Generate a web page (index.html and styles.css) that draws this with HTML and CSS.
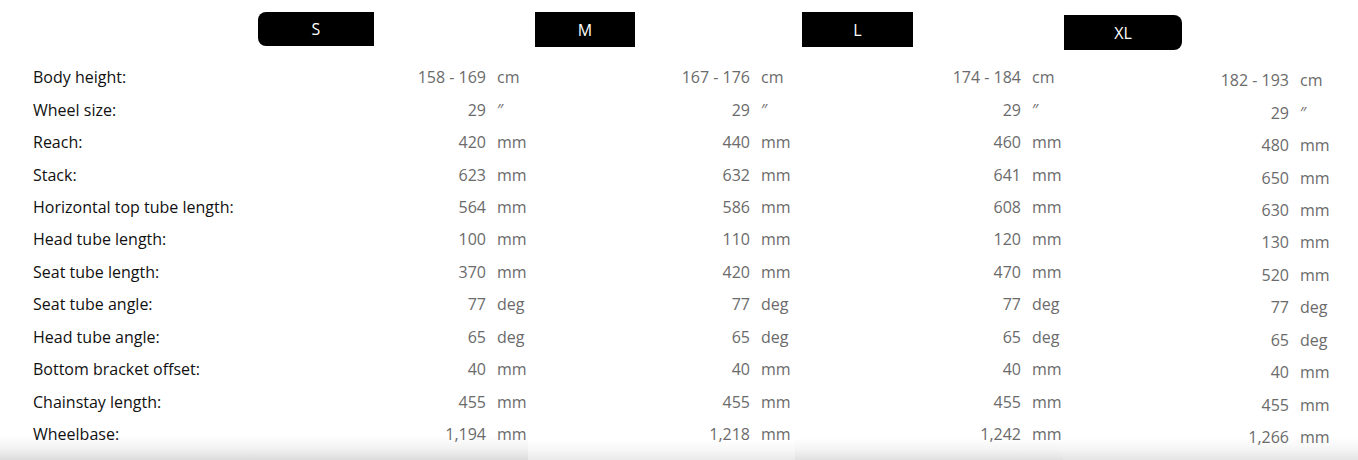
FILE: index.html
```html
<!DOCTYPE html>
<html lang="en">
<head>
<meta charset="utf-8">
<title>Geometry</title>
<link rel="stylesheet" href="styles.css">
</head>
<body>
<div class="geo">
  <div class="col col-s">
    <div class="head head-s">S</div>
    <div class="rows">
      <div class="row"><span class="label">Body height:</span><span class="num">158 - 169</span><span class="unit">cm</span></div>
      <div class="row"><span class="label">Wheel size:</span><span class="num">29</span><span class="unit">″</span></div>
      <div class="row"><span class="label">Reach:</span><span class="num">420</span><span class="unit">mm</span></div>
      <div class="row"><span class="label">Stack:</span><span class="num">623</span><span class="unit">mm</span></div>
      <div class="row"><span class="label">Horizontal top tube length:</span><span class="num">564</span><span class="unit">mm</span></div>
      <div class="row"><span class="label">Head tube length:</span><span class="num">100</span><span class="unit">mm</span></div>
      <div class="row"><span class="label">Seat tube length:</span><span class="num">370</span><span class="unit">mm</span></div>
      <div class="row"><span class="label">Seat tube angle:</span><span class="num">77</span><span class="unit">deg</span></div>
      <div class="row"><span class="label">Head tube angle:</span><span class="num">65</span><span class="unit">deg</span></div>
      <div class="row"><span class="label">Bottom bracket offset:</span><span class="num">40</span><span class="unit">mm</span></div>
      <div class="row"><span class="label">Chainstay length:</span><span class="num">455</span><span class="unit">mm</span></div>
      <div class="row"><span class="label">Wheelbase:</span><span class="num">1,194</span><span class="unit">mm</span></div>
    </div>
  </div>
  <div class="col col-m">
    <div class="head head-m">M</div>
    <div class="rows">
      <div class="row"><span class="num">167 - 176</span><span class="unit">cm</span></div>
      <div class="row"><span class="num">29</span><span class="unit">″</span></div>
      <div class="row"><span class="num">440</span><span class="unit">mm</span></div>
      <div class="row"><span class="num">632</span><span class="unit">mm</span></div>
      <div class="row"><span class="num">586</span><span class="unit">mm</span></div>
      <div class="row"><span class="num">110</span><span class="unit">mm</span></div>
      <div class="row"><span class="num">420</span><span class="unit">mm</span></div>
      <div class="row"><span class="num">77</span><span class="unit">deg</span></div>
      <div class="row"><span class="num">65</span><span class="unit">deg</span></div>
      <div class="row"><span class="num">40</span><span class="unit">mm</span></div>
      <div class="row"><span class="num">455</span><span class="unit">mm</span></div>
      <div class="row"><span class="num">1,218</span><span class="unit">mm</span></div>
    </div>
  </div>
  <div class="col col-l">
    <div class="head head-l">L</div>
    <div class="rows">
      <div class="row"><span class="num">174 - 184</span><span class="unit">cm</span></div>
      <div class="row"><span class="num">29</span><span class="unit">″</span></div>
      <div class="row"><span class="num">460</span><span class="unit">mm</span></div>
      <div class="row"><span class="num">641</span><span class="unit">mm</span></div>
      <div class="row"><span class="num">608</span><span class="unit">mm</span></div>
      <div class="row"><span class="num">120</span><span class="unit">mm</span></div>
      <div class="row"><span class="num">470</span><span class="unit">mm</span></div>
      <div class="row"><span class="num">77</span><span class="unit">deg</span></div>
      <div class="row"><span class="num">65</span><span class="unit">deg</span></div>
      <div class="row"><span class="num">40</span><span class="unit">mm</span></div>
      <div class="row"><span class="num">455</span><span class="unit">mm</span></div>
      <div class="row"><span class="num">1,242</span><span class="unit">mm</span></div>
    </div>
  </div>
  <div class="col col-xl">
    <div class="head head-xl">XL</div>
    <div class="rows">
      <div class="row"><span class="num">182 - 193</span><span class="unit">cm</span></div>
      <div class="row"><span class="num">29</span><span class="unit">″</span></div>
      <div class="row"><span class="num">480</span><span class="unit">mm</span></div>
      <div class="row"><span class="num">650</span><span class="unit">mm</span></div>
      <div class="row"><span class="num">630</span><span class="unit">mm</span></div>
      <div class="row"><span class="num">130</span><span class="unit">mm</span></div>
      <div class="row"><span class="num">520</span><span class="unit">mm</span></div>
      <div class="row"><span class="num">77</span><span class="unit">deg</span></div>
      <div class="row"><span class="num">65</span><span class="unit">deg</span></div>
      <div class="row"><span class="num">40</span><span class="unit">mm</span></div>
      <div class="row"><span class="num">455</span><span class="unit">mm</span></div>
      <div class="row"><span class="num">1,266</span><span class="unit">mm</span></div>
    </div>
  </div>
</div>
</body>
</html>
```
FILE: styles.css
```css
html, body {
  margin: 0;
  padding: 0;
  background: #fff;
}
body {
  width: 1358px;
  height: 460px;
  overflow: hidden;
  font-family: "Open Sans", "Noto Sans", "Liberation Sans", sans-serif;
  font-size: 16px;
}
.geo {
  display: flex;
  height: 460px;
}
.col {
  display: flex;
  flex-direction: column;
  padding-top: 12px;
  box-sizing: border-box;
  height: 460px;
}
.col-s {
  width: 528px;
  background: linear-gradient(to bottom, #fff 0, #fff 436px, #f1f1f1 449px, #dcdcdc 460px);
}
.col-m {
  width: 267px;
  background: linear-gradient(to bottom, #fff 0, #fff 440px, #f6f6f6 451px, #e9e9e9 460px);
}
.col-l {
  width: 268px;
  background: linear-gradient(to bottom, #fff 0, #fff 438px, #f3f3f3 450px, #e1e1e1 460px);
}
.col-xl {
  width: 295px;
  padding-top: 15px;
  background: linear-gradient(to bottom, #fff 0, #fff 438px, #f4f4f4 450px, #e4e4e4 460px);
}
.head {
  height: 35px;
  background: #000;
  color: #fff;
  display: flex;
  align-items: center;
  justify-content: center;
  font-size: 16px;
  flex: none;
}
.head-s {
  margin-left: 258px;
  width: 116px;
  height: 34px;
  border-radius: 8px 0 0 8px;
}
.head-m {
  margin-left: 7px;
  width: 100px;
}
.head-l {
  margin-left: 7px;
  width: 111px;
}
.head-xl {
  margin-left: 1px;
  width: 118px;
  border-radius: 0 8px 8px 0;
}
.rows {
  margin-top: 14px;
  display: flex;
  flex-direction: column;
}
.col-s .rows {
  margin-top: 15px;
}
.row {
  height: 32.45px;
  display: flex;
  align-items: center;
  white-space: nowrap;
}
.label {
  width: 353px;
  padding-left: 33px;
  color: #111;
}
.num {
  text-align: right;
  color: #6b6b6b;
}
.unit {
  margin-left: 11px;
  color: #6b6b6b;
}
.col-s .num { width: 100px; }
.col-m .num { width: 222px; }
.col-l .num { width: 226px; }
.col-xl .num { width: 226px; }
```
